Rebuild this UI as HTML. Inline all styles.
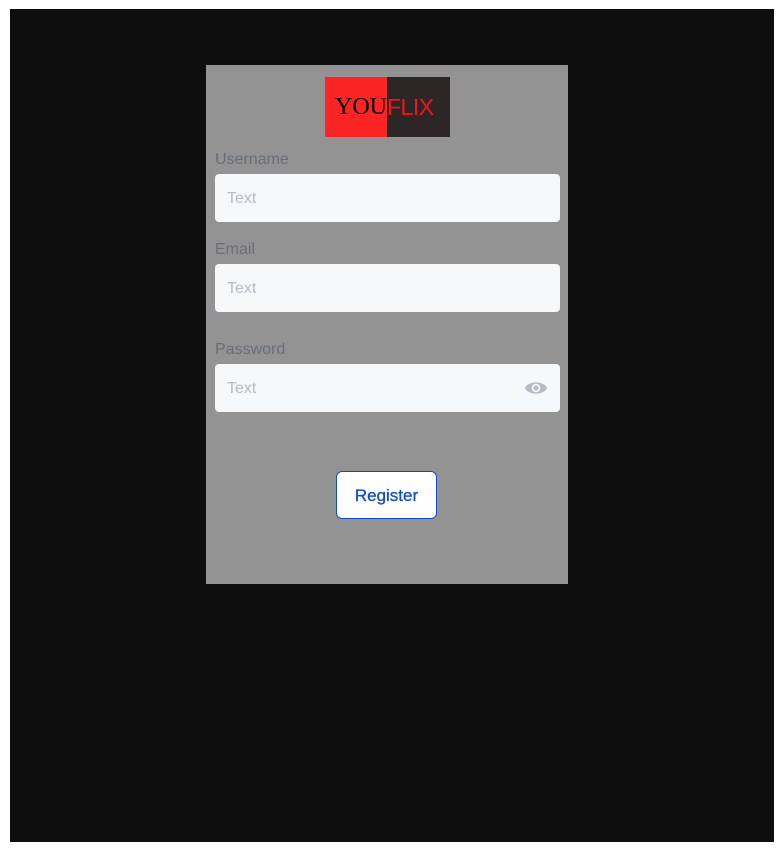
<!DOCTYPE html>
<html><head><style>
*{margin:0;padding:0;box-sizing:border-box}
body{width:784px;height:856px;background:#fff;position:relative;font-family:"Liberation Sans",sans-serif;overflow:hidden}
.bg{position:absolute;left:10px;top:9px;width:764px;height:833px;background:#0f0e0f}
.card{position:absolute;left:206px;top:65px;width:362px;height:519px;background:#939393}
.logo{position:absolute;left:119px;top:12px;width:125px;height:60px}
.l1{position:absolute;left:0;top:0;width:62px;height:60px;background:#fb2424}
.l2{position:absolute;left:62px;top:0;width:63px;height:60px;background:#2d2626}
.you{position:absolute;left:10px;top:17px;font-family:"Liberation Serif",serif;font-size:24px;color:#000}
.flix{position:absolute;left:62px;top:17px;font-size:23px;color:#f31616;letter-spacing:-0.5px}
.lab{position:absolute;left:9px;font-size:16px;color:#6a6c78}
.inp{position:absolute;left:9px;width:345px;height:48px;background:#f7f8fa;border-radius:4px}
.inp span{position:absolute;left:12px;top:16px;font-size:16px;color:#b8bac6}
.btn{position:absolute;left:130px;top:406px;width:101px;height:48px;background:#fff;border:1px solid #0f4ad6;border-radius:6px;color:#0f4ad6;font-size:17px;text-align:center;line-height:47px;-webkit-text-stroke:0.3px #0f4ad6}
</style></head><body>
<div class="bg"></div>
<div class="card">
<div class="logo"><div class="l1"></div><div class="l2"></div><div class="you">YOU</div><div class="flix">FLIX</div></div>
<div class="lab" style="top:86px">Username</div>
<div class="inp" style="top:109px"><span>Text</span></div>
<div class="lab" style="top:176px">Email</div>
<div class="inp" style="top:199px"><span>Text</span></div>
<div class="lab" style="top:276px">Password</div>
<div class="inp" style="top:299px"><span>Text</span>
<svg style="position:absolute;left:309px;top:14px" width="24" height="20" viewBox="0 0 24 20"><path d="M1 10C4 2.5 20 2.5 23 10C20 17.5 4 17.5 1 10Z" fill="#b8bac6"/><circle cx="12" cy="10" r="4.3" fill="#f7f8fa"/><circle cx="12" cy="10" r="2.6" fill="#b8bac6"/></svg></div>
<div class="btn">Register</div>
</div>
</body></html>
